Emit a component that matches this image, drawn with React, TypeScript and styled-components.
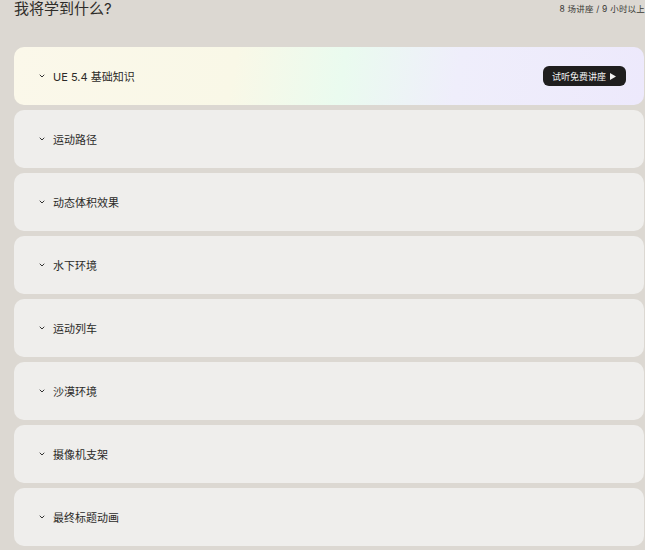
import React from 'react'
import styled, { createGlobalStyle } from 'styled-components'

const GlobalStyle = createGlobalStyle`
  html, body {
    margin: 0;
    padding: 0;
    background: #dcd8d2;
    font-family: Inter, "Noto Sans CJK SC", sans-serif;
    overflow: hidden;
  }
`

const Page = styled.div`
  padding: 0 0 0 14px;
  width: 630px;
`

const Header = styled.div`
  display: flex;
  justify-content: space-between;
  align-items: center;
  height: 18px;
  margin-bottom: 29px;
  margin-right: -1px;
`

const Title = styled.h2`
  margin: 0;
  font-size: 15px;
  font-weight: 400;
  color: #2e2c29;
  line-height: 18px;
`

const Meta = styled.span`
  font-size: 8.5px;
  color: #3a3835;
  line-height: 18px;
  letter-spacing: 0.2px;
`

const List = styled.div`
  display: flex;
  flex-direction: column;
  gap: 5px;
`

const Card = styled.div<{ highlight?: boolean }>`
  height: 58px;
  border-radius: 10px;
  display: flex;
  align-items: center;
  padding: 0 18px 0 25px;
  background: ${p =>
    p.highlight
      ? 'linear-gradient(100deg, #fbf8ea 0%, #f9f8e7 35%, #eafbef 52%, #efeefb 70%, #ede9fc 100%)'
      : '#efeeec'};
`

const Chevron = styled.svg`
  width: 6px;
  height: 4px;
  margin-right: 8px;
  flex-shrink: 0;
`

const Label = styled.span`
  font-size: 11px;
  color: #2b2a28;
  flex: 1;
`

const TrialButton = styled.button`
  height: 20px;
  padding: 0 10px 0 9px;
  border: none;
  border-radius: 6px;
  background: #1f1e1e;
  color: #f3f3f3;
  font-family: inherit;
  font-size: 9px;
  display: flex;
  align-items: center;
  gap: 4px;
`

const lessons = [
  'UE 5.4 基础知识',
  '运动路径',
  '动态体积效果',
  '水下环境',
  '运动列车',
  '沙漠环境',
  '摄像机支架',
  '最终标题动画',
]

export default function App() {
  return (
    <Page>
      <GlobalStyle />
      <Header>
        <Title>我将学到什么?</Title>
        <Meta>8 场讲座 / 9 小时以上</Meta>
      </Header>
      <List>
        {lessons.map((name, i) => (
          <Card key={name} highlight={i === 0}>
            <Chevron viewBox="0 0 6 4">
              <path d="M1 1l2 2 2-2" fill="none" stroke="#333" strokeWidth="1" strokeLinecap="round" />
            </Chevron>
            <Label>{name}</Label>
            {i === 0 && (
              <TrialButton>
                试听免费讲座
                <svg width="6" height="7" viewBox="0 0 6 7">
                  <path d="M0 0l6 3.5L0 7z" fill="#f3f3f3" />
                </svg>
              </TrialButton>
            )}
          </Card>
        ))}
      </List>
    </Page>
  )
}
